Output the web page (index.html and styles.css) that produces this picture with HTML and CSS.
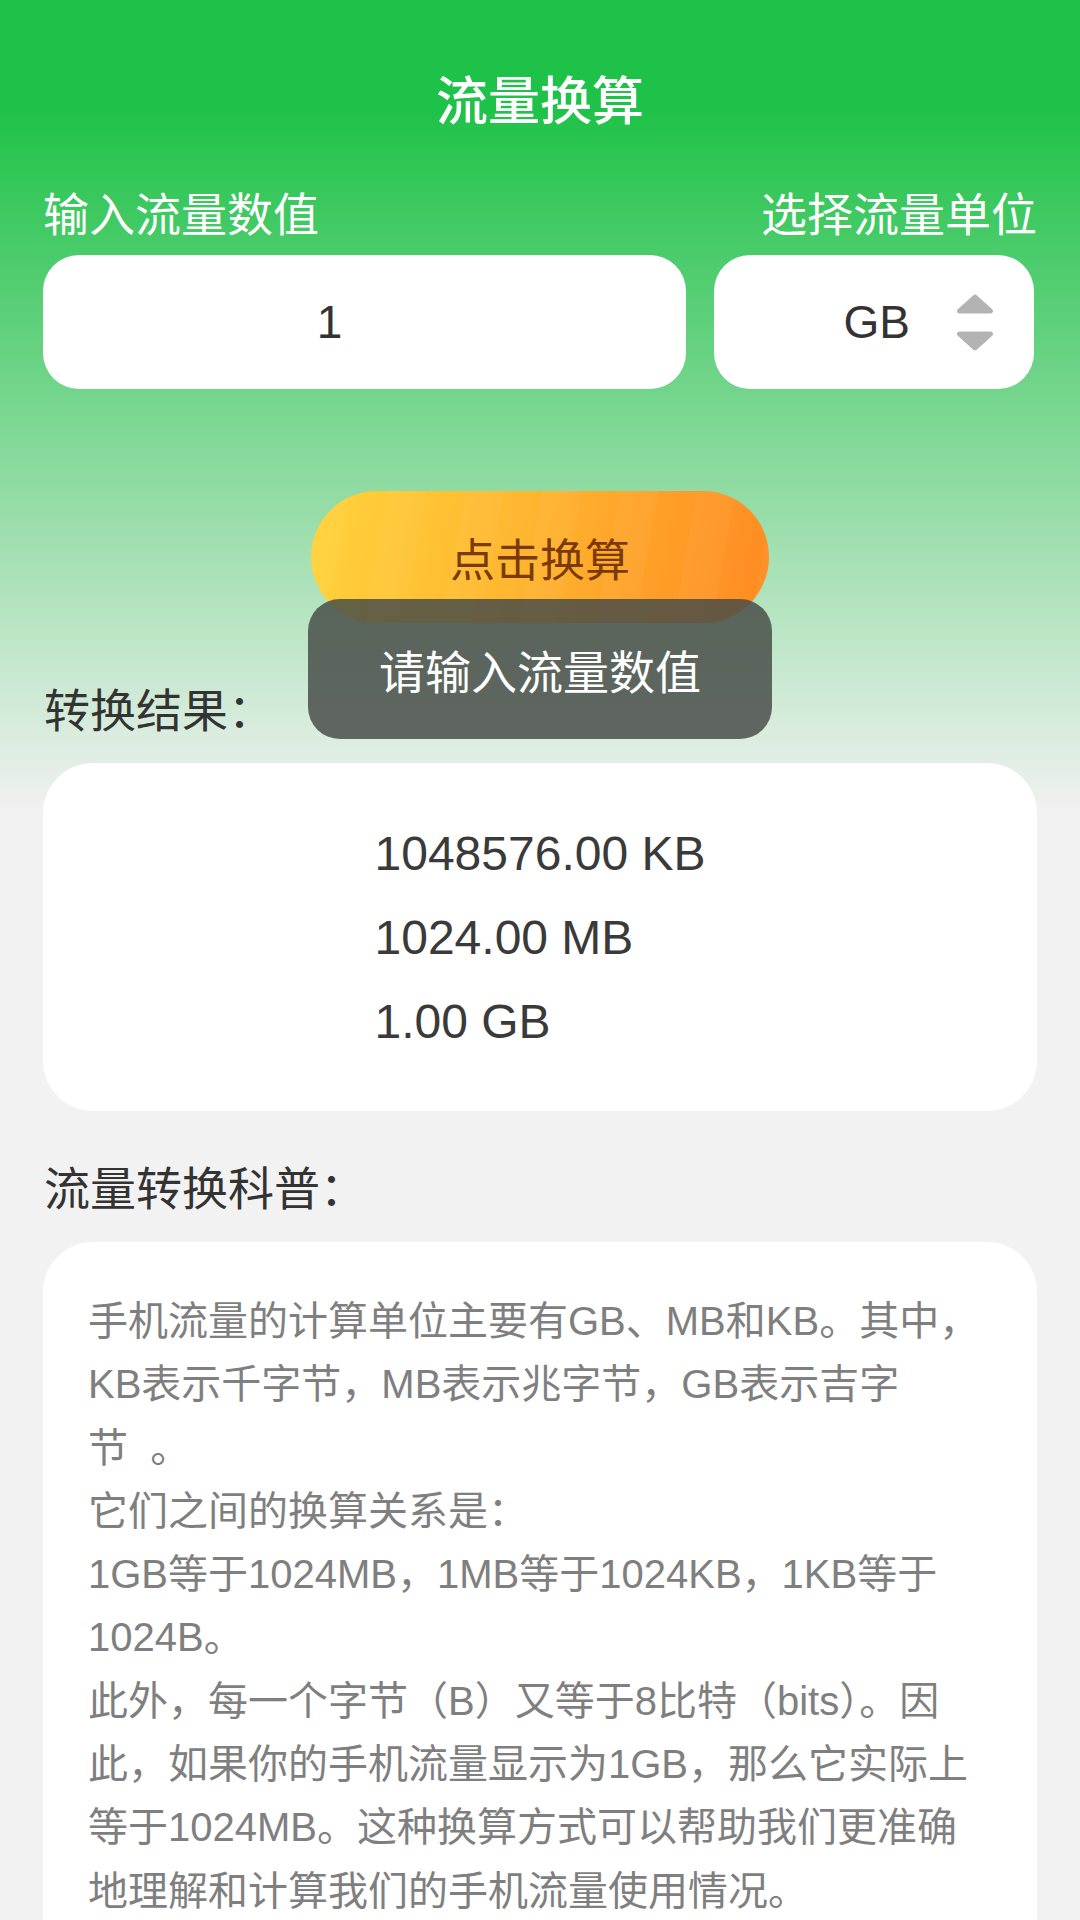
FILE: index.html
```html
<!DOCTYPE html>
<html lang="zh-CN">
<head>
<meta charset="utf-8">
<title>流量换算</title>
<link rel="stylesheet" href="styles.css">
</head>
<body>
<div class="page">
  <h1 class="title">流量换算</h1>
  <div class="labels">
    <span>输入流量数值</span>
    <span>选择流量单位</span>
  </div>
  <div class="inputs">
    <div class="field value-field">1</div>
    <div class="field unit-field">
      <span class="unit-text">GB</span>
      <svg class="spinner" width="38" height="57" viewBox="0 0 38 57">
        <polygon points="19,3 34.5,17 3.5,17" fill="#b3b3b3" stroke="#b3b3b3" stroke-width="5" stroke-linejoin="round"/>
        <polygon points="3.5,40 34.5,40 19,54" fill="#b3b3b3" stroke="#b3b3b3" stroke-width="5" stroke-linejoin="round"/>
      </svg>
    </div>
  </div>
  <div class="btn-row">
    <div class="convert-btn">点击换算</div>
  </div>
  <div class="section-label result-label">转换结果：</div>
  <div class="card result-card">
    <div class="result-list">
      <div>1048576.00 KB</div>
      <div>1024.00 MB</div>
      <div>1.00 GB</div>
    </div>
  </div>
  <div class="section-label info-label">流量转换科普：</div>
  <div class="card info-card">
    <p class="info-text">手机流量的计算单位主要有GB、MB和KB。其中，<br>KB表示千字节，MB表示兆字节，GB表示吉字<br>节&nbsp; 。<br>它们之间的换算关系是：<br>1GB等于1024MB，1MB等于1024KB，1KB等于<br>1024B。<br>此外，每一个字节（B）又等于8比特（bits）。因<br>此，如果你的手机流量显示为1GB，那么它实际上<br>等于1024MB。这种换算方式可以帮助我们更准确<br>地理解和计算我们的手机流量使用情况。</p>
  </div>
  <div class="toast">请输入流量数值</div>
</div>
</body>
</html>
```

FILE: styles.css
```css
* {
  box-sizing: border-box;
}

html, body {
  margin: 0;
  padding: 0;
}

body {
  width: 1080px;
  min-height: 1920px;
  background-color: #f2f2f2;
  background-image: linear-gradient(to bottom, #1fc248 0px, #1fc248 110px, #f0f1f0 808px);
  background-size: 100% 808px;
  background-repeat: no-repeat;
  font-family: "Liberation Sans", "Noto Sans CJK SC", sans-serif;
  overflow: hidden;
}

.page {
  position: relative;
  padding: 0 43px;
}

.title {
  margin: 0;
  padding: 68px 0 55px;
  font-size: 52px;
  line-height: 60px;
  font-weight: 500;
  color: #ffffff;
  text-align: center;
  font-family: "Noto Sans CJK SC", sans-serif;
}

.labels {
  display: flex;
  justify-content: space-between;
  font-family: "Noto Sans CJK SC", sans-serif;
  font-size: 46px;
  line-height: 56px;
  color: #ffffff;
}

.inputs {
  display: flex;
  gap: 28px;
  margin-top: 16px;
}

.field {
  height: 134px;
  background: #ffffff;
  border-radius: 36px;
  font-size: 46px;
  color: #333333;
  display: flex;
  align-items: center;
}

.value-field {
  flex: 0 0 643px;
  justify-content: center;
  padding-right: 70px;
}

.unit-field {
  flex: 1;
  justify-content: flex-end;
  padding-right: 40px;
  gap: 46px;
  margin-right: 3px;
}

.spinner {
  display: block;
}

.btn-row {
  display: flex;
  justify-content: center;
  margin-top: 102px;
}

.convert-btn {
  width: 458px;
  height: 132px;
  border-radius: 66px;
  background-color: #ffb02e;
  background-image:
    repeating-linear-gradient(100deg, rgba(255, 255, 255, 0.035) 0px, rgba(255, 255, 255, 0.035) 38px, rgba(255, 255, 255, 0) 38px, rgba(255, 255, 255, 0) 76px),
    linear-gradient(100deg, #ffd33b 0%, #ffb630 45%, #ff8a22 100%);
  color: #7b3b00;
  font-family: "Noto Sans CJK SC", sans-serif;
  font-size: 45px;
  display: flex;
  align-items: center;
  justify-content: center;
}

.section-label {
  font-family: "Noto Sans CJK SC", sans-serif;
  font-size: 46px;
  line-height: 56px;
  color: #333333;
  padding-left: 1px;
}

.result-label {
  margin-top: 56px;
}

.info-label {
  margin-top: 46px;
}

.card {
  background: #ffffff;
  border-radius: 50px;
}

.result-card {
  margin-top: 28px;
  padding: 49px 0 47px;
  display: flex;
  justify-content: center;
}

.result-list {
  font-size: 48px;
  line-height: 84px;
  color: #3a3a3a;
}

.info-card {
  margin-top: 29px;
  padding: 48px 30px 60px 45px;
}

.info-text {
  margin: 0;
  font-size: 40px;
  line-height: 63.3px;
  color: #7f7f7f;
  white-space: nowrap;
}

.toast {
  position: absolute;
  left: 308px;
  top: 599px;
  width: 464px;
  height: 140px;
  border-radius: 32px;
  background: rgba(72, 76, 72, 0.84);
  color: #ffffff;
  font-family: "Noto Sans CJK SC", sans-serif;
  font-size: 46px;
  display: flex;
  align-items: center;
  justify-content: center;
}
```
